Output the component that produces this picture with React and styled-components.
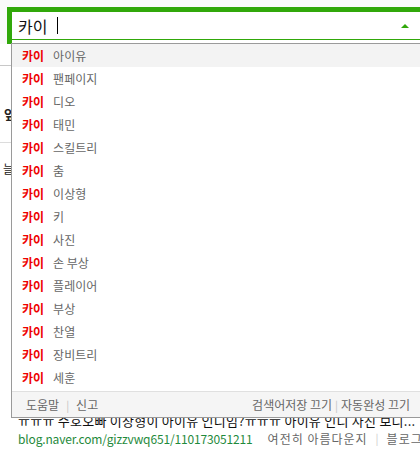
import React from "react";
import styled, { createGlobalStyle } from "styled-components";

const GlobalStyle = createGlobalStyle`
  html, body {
    margin: 0;
    padding: 0;
    background: #fff;
    overflow: hidden;
  }
  body {
    font-family: "Noto Sans CJK KR", "Noto Sans", sans-serif;
  }
`;

const Page = styled.div`
  position: relative;
  width: 420px;
  height: 450px;
  overflow: hidden;
`;

const Header = styled.div`
  background: #fafafa;
  height: 44px;
  padding: 7px 0 0 7px;
  box-sizing: border-box;
`;

const SearchBox = styled.div`
  width: 440px;
  height: 37px;
  box-sizing: border-box;
  border: 5px solid #31a80a;
  border-bottom: none;
  background: #fff;
`;

const InputRow = styled.div`
  display: flex;
  align-items: center;
  height: 27px;
  padding: 0 33px 0 6px;
  border-bottom: 1px solid #31a80a;
`;

const Query = styled.span`
  font-size: 16px;
  color: #111;
  line-height: 16px;
`;

const Caret = styled.span`
  display: inline-block;
  width: 1px;
  height: 17px;
  background: #000;
  margin-left: 10px;
`;

const Arrow = styled.span`
  margin-left: auto;
  width: 0;
  height: 0;
  border-left: 4px solid transparent;
  border-right: 4px solid transparent;
  border-bottom: 4px solid #31a80a;
`;

const Content = styled.div`
  position: relative;
`;

const TabLine = styled.div`
  height: 21px;
  border-bottom: 1px solid #c8c8c8;
`;

const SectionTitle = styled.div`
  padding: 38px 0 0 4px;
  height: 38px;
  font-size: 13px;
  font-weight: bold;
  color: #222;
  border-bottom: 1px solid #dcdcdc;
`;

const Snippet = styled.div`
  padding: 17px 0 0 3px;
  font-size: 12px;
  color: #222;
  height: 253px;
`;

const ResultTitle = styled.div`
  padding-left: 18px;
  font-size: 13px;
  line-height: 16px;
  color: #111;
  white-space: nowrap;
  letter-spacing: 0.25px;
`;

const ResultMeta = styled.div`
  display: flex;
  align-items: center;
  margin-top: 2px;
  padding-left: 18px;
  font-size: 12px;
  line-height: 15px;
  white-space: nowrap;
`;

const Url = styled.span`
  color: #1f8a3c;
  margin-right: 15px;
  letter-spacing: -0.15px;
`;

const Meta = styled.span`
  color: #666;
  letter-spacing: 1px;
`;

const Sep = styled.span`
  color: #ccc;
  margin: 0 8px;
  font-size: 11px;
`;

const Dropdown = styled.div`
  position: absolute;
  left: 11px;
  top: 43px;
  width: 419px;
  border: 1px solid #9a9a9a;
  border-right: none;
  background: #fff;
  z-index: 2;
`;

const List = styled.ul`
  list-style: none;
  margin: 0;
  padding: 0 0 2px;
`;

const Item = styled.li`
  height: 23px;
  display: flex;
  align-items: center;
  padding-left: 10px;
  font-size: 12px;
  background: ${(p) => (p.$active ? "#f3f3f3" : "transparent")};
`;

const Keyword = styled.b`
  color: #ee0000;
  margin-right: 9px;
`;

const Word = styled.span`
  color: #666;
`;

const Footer = styled.div`
  display: flex;
  justify-content: space-between;
  align-items: center;
  height: 25px;
  padding: 0 21px 0 14px;
  background: #f5f5f5;
  border-top: 1px solid #e0e0e0;
  font-size: 12px;
  color: #666;
`;

const FooterGroup = styled.div`
  display: flex;
  align-items: center;
`;

const FooterSep = styled.span`
  color: #c4c4c4;
  margin: 0 ${(p) => (p.$tight ? "3px" : "7px")};
  font-size: 11px;
`;

const words = [
  "아이유",
  "팬페이지",
  "디오",
  "태민",
  "스킬트리",
  "춤",
  "이상형",
  "키",
  "사진",
  "손 부상",
  "플레이어",
  "부상",
  "찬열",
  "장비트리",
  "세훈",
];

export default function App() {
  return (
    <Page>
      <GlobalStyle />
      <Header>
        <SearchBox>
          <InputRow>
            <Query>카이</Query>
            <Caret />
            <Arrow />
          </InputRow>
        </SearchBox>
      </Header>

      <Content>
        <TabLine />
        <SectionTitle>앞</SectionTitle>
        <Snippet>늘</Snippet>
        <ResultTitle>
          ㅠㅠㅠ 수호오빠 이상형이 아이유 인디임?ㅠㅠㅠ 아이유 인디 사진 보니...
        </ResultTitle>
        <ResultMeta>
          <Url>blog.naver.com/gizzvwq651/110173051211</Url>
          <Meta>여전히 아름다운지</Meta>
          <Sep>|</Sep>
          <Meta>블로그</Meta>
        </ResultMeta>
      </Content>

      <Dropdown>
        <List>
          {words.map((w, i) => (
            <Item key={w} $active={i === 0}>
              <Keyword>카이</Keyword>
              <Word>{w}</Word>
            </Item>
          ))}
        </List>
        <Footer>
          <FooterGroup>
            <span>도움말</span>
            <FooterSep>|</FooterSep>
            <span>신고</span>
          </FooterGroup>
          <FooterGroup>
            <span>검색어저장 끄기</span>
            <FooterSep $tight>|</FooterSep>
            <span>자동완성 끄기</span>
          </FooterGroup>
        </Footer>
      </Dropdown>
    </Page>
  );
}
